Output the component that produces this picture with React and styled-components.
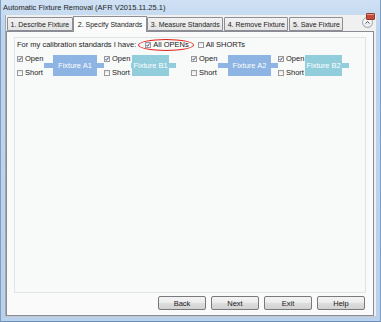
import React from 'react';
import styled, { createGlobalStyle } from 'styled-components';

const GlobalStyle = createGlobalStyle`
    html, body {
        margin: 0;
        padding: 0;
        background: #b9d1ea;
    }
    body {
        font-family: "Liberation Sans", Arial, sans-serif;
        font-size: 7.5px;
        color: #1b1b1b;
    }
`;

const fixtures = [
    { name: 'Fixture A1', color: '#8db4e2', lead: 9, width: 44 },
    { name: 'Fixture B1', color: '#92cddc', lead: 1, width: 37 },
    { name: 'Fixture A2', color: '#8db4e2', lead: 10, width: 43 },
    { name: 'Fixture B2', color: '#92cddc', lead: 0, width: 37 },
];

const tabs = [
    '1. Describe Fixture',
    '2. Specify Standards',
    '3. Measure Standards',
    '4. Remove Fixture',
    '5. Save Fixture',
];

export default function App() {
    return (
        <>
            <GlobalStyle />
            <Window>
                <TitleBar>
                    <Title>Automatic Fixture Removal (AFR V2015.11.25.1)</Title>
                    <Close />
                </TitleBar>
                <Client>
                    <TabStrip>
                        {tabs.map((t, i) => (
                            <Tab key={t} $active={i === 1}>{t}</Tab>
                        ))}
                        <Collapse>
                            <svg width="5" height="3" viewBox="0 0 5 3">
                                <path d="M0.5 2.5 L2.5 0.6 L4.5 2.5" fill="none" stroke="#3c3c3c" strokeWidth="0.9" />
                            </svg>
                        </Collapse>
                    </TabStrip>
                    <Panel>
                        <Group>
                            <HeaderRow>
                                <span>For my calibration standards I have:</span>
                                <Highlight>
                                    <Check checked />
                                    All OPENs
                                </Highlight>
                                <CheckLabel>
                                    <Check />
                                    All SHORTs
                                </CheckLabel>
                            </HeaderRow>
                            <FixtureRow>
                                {fixtures.map((f) => (
                                    <FixtureGroup key={f.name}>
                                        <Options>
                                            <CheckLabel><Check checked />Open</CheckLabel>
                                            <CheckLabel><Check />Short</CheckLabel>
                                        </Options>
                                        <Lead $color={f.color} $w={f.lead} />
                                        <FixtureBox $color={f.color} $w={f.width}>{f.name}</FixtureBox>
                                        <Lead $color={f.color} $w={7} />
                                    </FixtureGroup>
                                ))}
                            </FixtureRow>
                        </Group>
                        <ButtonRow>
                            <Button>Back</Button>
                            <Button>Next</Button>
                            <Button>Exit</Button>
                            <Button>Help</Button>
                        </ButtonRow>
                    </Panel>
                </Client>
            </Window>
        </>
    );
}

function Check({ checked }) {
    return (
        <Box>
            {checked && (
                <svg width="4" height="4" viewBox="0 0 4 4">
                    <path d="M0.5 2.1 L1.5 3.3 L3.6 0.5" fill="none" stroke="#2a3f8a" strokeWidth="0.9" />
                </svg>
            )}
        </Box>
    );
}

const Window = styled.div`
    position: relative;
    width: 381px;
    height: 322px;
    box-sizing: border-box;
    display: flex;
    flex-direction: column;
    padding: 0 4px 4px 4px;
    background: linear-gradient(180deg, #cfe0f3 0%, #bcd4ee 10%, #b9d1ea 100%);
    border-left: 1px solid #7d9fc6;
    border-right: 1px solid #7d9fc6;
    border-bottom: 1px solid #6b8fb8;
`;

const TitleBar = styled.div`
    height: 15px;
    display: flex;
    align-items: flex-start;
    padding-top: 3px;
    box-sizing: border-box;
`;

const Title = styled.div`
    margin-left: -2px;
    font-size: 7.5px;
    color: #1e1e1e;
    line-height: 9px;
`;

const Close = styled.div`
    position: absolute;
    right: 5px;
    top: 13px;
    width: 7px;
    height: 5px;
    border: 1px solid #8e3b2e;
    border-radius: 1px;
    background: #c9493a;
    box-shadow: inset 0 1px 0 #e79a8c;
    z-index: 2;
`;

const Client = styled.div`
    flex: 1;
    display: flex;
    flex-direction: column;
    background: #f0f0f0;
    border-left: 1px solid #a3a9b2;
    border-bottom: 1px solid #c4c8cd;
`;

const TabStrip = styled.div`
    height: 16px;
    display: flex;
    align-items: flex-end;
    padding-left: 1px;
`;

const Tab = styled.div`
    height: ${(p) => (p.$active ? '15px' : '12px')};
    display: flex;
    align-items: center;
    padding: 0 ${(p) => (p.$active ? '4px' : '2.5px')};
    margin-left: ${(p) => (p.$active ? '-1px' : '0')};
    margin-right: ${(p) => (p.$active ? '0' : '1px')};
    margin-bottom: ${(p) => (p.$active ? '-1px' : '0')};
    border: 1px solid #8c8e94;
    border-bottom: ${(p) => (p.$active ? 'none' : '1px solid #8c8e94')};
    border-radius: 1px 1px 0 0;
    background: ${(p) => (p.$active ? '#fbfbfb' : 'linear-gradient(180deg, #f2f2f2 0%, #e3e3e3 100%)')};
    position: relative;
    z-index: ${(p) => (p.$active ? 1 : 0)};
    white-space: nowrap;
    font-size: 7px;
    line-height: 9px;
`;

const Collapse = styled.div`
    margin: 0 3px 3px auto;
    width: 9px;
    height: 9px;
    border: 1px solid #9aa3ad;
    border-radius: 50%;
    background: linear-gradient(180deg, #ffffff 0%, #e6e9ed 100%);
    display: flex;
    align-items: center;
    justify-content: center;
`;

const Panel = styled.div`
    flex: 1;
    display: flex;
    flex-direction: column;
    margin-right: 2px;
    background: #fafafa;
    border: 1px solid #898c95;
    padding: 5px 7px 5px 7px;
`;

const Group = styled.div`
    flex: 1;
    border: 1px solid #dfe4e4;
    background: #f8f9f9;
    padding: 1px 2px;
`;

const HeaderRow = styled.div`
    display: flex;
    align-items: center;
    height: 11px;
    line-height: 9px;
`;

const CheckLabel = styled.label`
    display: flex;
    align-items: center;
    gap: 1px;
    line-height: 9px;
    white-space: nowrap;
`;

const Highlight = styled(CheckLabel)`
    flex: none;
    margin-left: 2px;
    margin-right: 4px;
    padding: 0 4px 0 6px;
    height: 10px;
    border: 1px solid #e0251c;
    border-radius: 50%;
`;

const Box = styled.span`
    flex: none;
    width: 4px;
    height: 4px;
    border: 1px solid #9a9a9a;
    background: linear-gradient(180deg, #e6e6e6 0%, #ffffff 100%);
    display: inline-flex;
    align-items: center;
    justify-content: center;
    margin-right: 1px;
`;

const FixtureRow = styled.div`
    display: grid;
    grid-template-columns: repeat(4, 87px);
    margin-top: 4px;
`;

const FixtureGroup = styled.div`
    display: flex;
    align-items: center;
`;

const Options = styled.div`
    width: 27px;
    display: flex;
    flex-direction: column;
    gap: 5px;
    position: relative;
    z-index: 1;
`;

const Lead = styled.div`
    width: ${(p) => p.$w}px;
    height: 5px;
    background: ${(p) => p.$color};
`;

const FixtureBox = styled.div`
    width: ${(p) => p.$w}px;
    height: 21px;
    background: ${(p) => p.$color};
    color: #ffffff;
    display: flex;
    align-items: center;
    justify-content: center;
    white-space: nowrap;
`;

const ButtonRow = styled.div`
    display: flex;
    justify-content: flex-end;
    gap: 5px;
    margin-top: 3px;
    margin-right: 1px;
`;

const Button = styled.button`
    width: 48px;
    height: 14px;
    padding: 0;
    font-family: inherit;
    font-size: 7.5px;
    color: #1b1b1b;
    border: 1px solid #7a7a7a;
    border-radius: 2px;
    background: linear-gradient(180deg, #f4f4f4 0%, #ececec 45%, #dcdcdc 55%, #d2d2d2 100%);
`;
